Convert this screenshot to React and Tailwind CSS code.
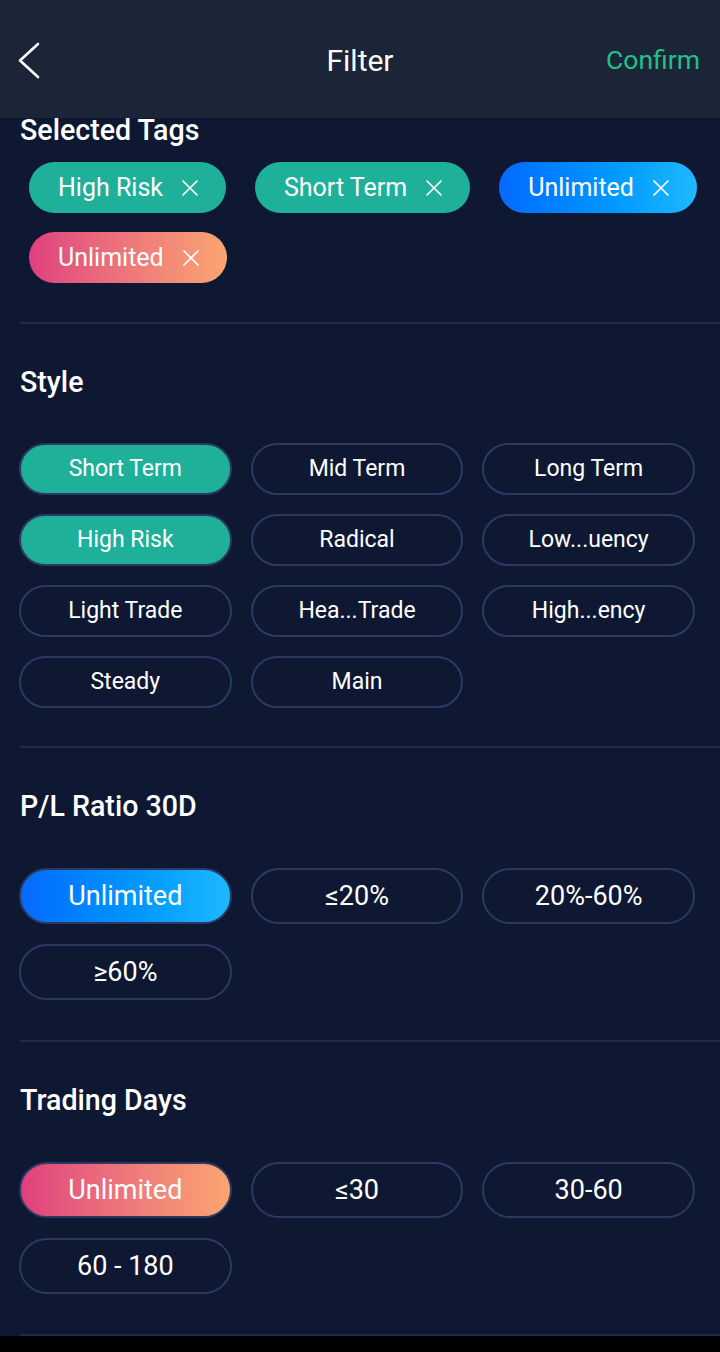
import React from 'react';

const font = { fontFamily: 'Roboto, "Noto Sans", Arial, sans-serif' };

const selectedTags = [
  { label: 'High Risk', tone: 'teal' },
  { label: 'Short Term', tone: 'teal' },
  { label: 'Unlimited', tone: 'blue' },
  { label: 'Unlimited', tone: 'pink' },
];

const toneClass = {
  teal: 'bg-[#1fb09a]',
  blue: 'bg-gradient-to-r from-[#0869ff] to-[#1db8ff]',
  pink: 'bg-gradient-to-r from-[#df3f7e] to-[#faa571]',
  none: 'bg-transparent',
};

const sections = [
  {
    title: 'Style',
    big: false,
    options: [
      { label: 'Short Term', tone: 'teal' },
      { label: 'Mid Term' },
      { label: 'Long Term' },
      { label: 'High Risk', tone: 'teal' },
      { label: 'Radical' },
      { label: 'Low...uency' },
      { label: 'Light Trade' },
      { label: 'Hea...Trade' },
      { label: 'High...ency' },
      { label: 'Steady' },
      { label: 'Main' },
    ],
  },
  {
    title: 'P/L Ratio 30D',
    big: true,
    options: [
      { label: 'Unlimited', tone: 'blue' },
      { label: '≤20%' },
      { label: '20%-60%' },
      { label: '≥60%' },
    ],
  },
  {
    title: 'Trading Days',
    big: true,
    options: [
      { label: 'Unlimited', tone: 'pink' },
      { label: '≤30' },
      { label: '30-60' },
      { label: '60 - 180' },
    ],
  },
];

const CloseIcon = () => (
  <svg width="16" height="16" viewBox="0 0 16 16" className="shrink-0">
    <path d="M1 1L15 15M15 1L1 15" stroke="white" strokeWidth="1.7" strokeLinecap="round" />
  </svg>
);

const Tag = ({ label, tone }) => (
  <div className={`h-[51px] rounded-full flex items-center pl-[29px] pr-[28px] gap-[19px] text-white text-[25px] ${toneClass[tone]}`}>
    <span>{label}</span>
    <CloseIcon />
  </div>
);

const Option = ({ label, tone, big }) => (
  <button
    className={`rounded-full border-2 border-[#2b3a62] flex items-center justify-center text-white ${
      big ? 'h-[56px] text-[27px]' : 'h-[52px] text-[23px]'
    } ${toneClass[tone || 'none']}`}
  >
    {label}
  </button>
);

const Divider = () => <div className="ml-[20px] h-[2px] bg-[#222c4a]" />;

export default function App() {
  return (
    <div className="w-[720px] h-[1352px] bg-black overflow-hidden" style={font}>
      <div className="bg-[#0e1833]">
        <header className="h-[118px] bg-[#1c2437] relative flex items-center justify-center">
          <svg width="24" height="40" viewBox="0 0 24 40" className="absolute left-[16px] top-[41px]">
            <polyline points="22,3 4,19.5 22,36" fill="none" stroke="white" strokeWidth="2.6" strokeLinecap="round" strokeLinejoin="round" />
          </svg>
          <h1 className="text-white text-[30px] font-normal leading-[40px] mt-[4px]">Filter</h1>
          <span className="absolute right-[20px] top-[42px] text-[#22c08a] text-[26.5px] leading-[36px]">Confirm</span>
        </header>

        <section className="pb-[39px]">
          <h2 className="pl-[20px] text-white text-[28.6px] font-medium leading-[24px] h-[24px]">Selected Tags</h2>
          <div className="mt-[20px] pl-[29px] flex flex-wrap gap-x-[29px] gap-y-[19px]">
            {selectedTags.map((t, i) => (
              <Tag key={i} {...t} />
            ))}
          </div>
        </section>
        <Divider />

        {sections.map((s, si) => (
          <React.Fragment key={si}>
            <section className={`pt-[40px] ${s.big ? 'pb-[40px]' : 'pb-[38px]'}`}>
              <h2 className="pl-[20px] text-white text-[28.6px] font-medium leading-[36px] h-[36px]">{s.title}</h2>
              <div
                className={`ml-[19px] w-[676px] grid grid-cols-3 gap-x-[19px] ${
                  s.big ? 'mt-[44px] gap-y-[20px]' : 'mt-[43px] gap-y-[19px]'
                }`}
              >
                {s.options.map((o, oi) => (
                  <Option key={oi} {...o} big={s.big} />
                ))}
              </div>
            </section>
            <Divider />
          </React.Fragment>
        ))}
      </div>
    </div>
  );
}
